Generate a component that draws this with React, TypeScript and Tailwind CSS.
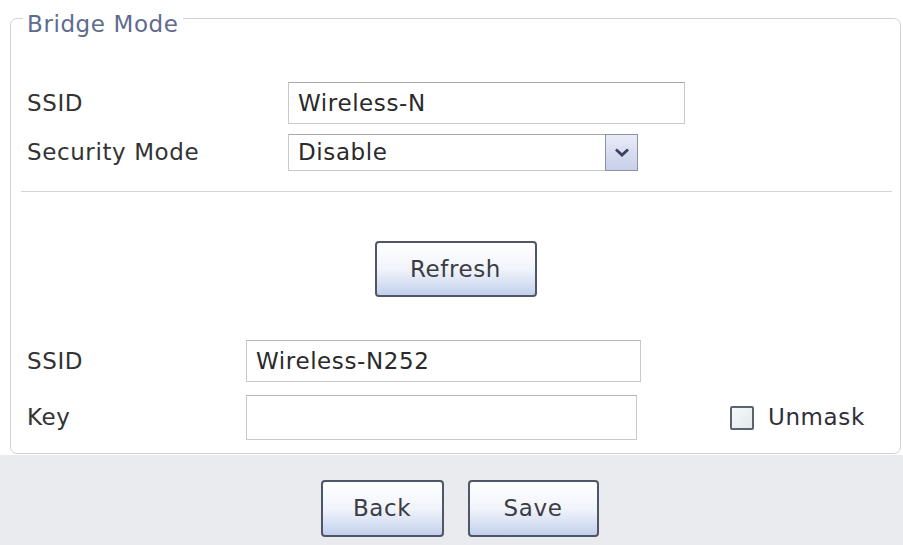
import React from "react";

function Btn({ label, w }: { label: string; w: string }) {
  return (
    <button
      type="button"
      className={`${w} h-[57px] rounded-[4px] border-2 border-[#4f5667] bg-gradient-to-b from-[#ffffff] via-[#f1f4fb] to-[#c3d0ec] text-[#3c3c44] text-[23px] tracking-[0.6px] flex items-center justify-center`}
    >
      {label}
    </button>
  );
}

export default function App() {
  return (
    <div className="w-[903px] h-[545px] flex flex-col bg-[#e9ebee] font-['DejaVu_Sans',sans-serif] text-[#333] text-[23px] tracking-[0.6px] overflow-hidden">
      <div className="bg-white pl-[10px] pr-[2px] pb-[1px]">
        <fieldset className="-mt-[2px] border border-[#cfd2d6] rounded-[7px] pl-[16px] pb-[13px]">
          <legend className="-ml-[4px] px-[4px] pt-[12px] leading-[28px] text-[#5e6b8e]">Bridge Mode</legend>

          <div className="mt-[44px] flex items-center h-[42px]">
            <div className="w-[261px]">SSID</div>
            <div className="w-[397px] h-[42px] border border-[#c9c9c9] border-t-[#a9a9a9] flex items-center pl-[9px] text-[#2a2a2a]">
              Wireless-N
            </div>
          </div>

          <div className="mt-[10px] flex items-center h-[37px]">
            <div className="w-[261px]">Security Mode</div>
            <div className="w-[350px] h-[37px] border border-[#c9c9c9] border-t-[#a9a9a9] flex items-center">
              <div className="flex-1 pl-[9px] text-[#2a2a2a]">Disable</div>
              <div className="w-[33px] h-[37px] -mr-px -my-px border border-[#8d92a3] bg-gradient-to-b from-[#e9ebf7] to-[#c9cfe9] flex items-center justify-center">
                <svg width="16" height="11" viewBox="0 0 16 11">
                  <path d="M2 2.5 L8 8 L14 2.5" fill="none" stroke="#3a4263" strokeWidth="2.8" />
                </svg>
              </div>
            </div>
          </div>

          <div className="mt-[20px] -ml-[6px] mr-[8px] h-px bg-[#d2d5d9]" />

          <div className="mt-[49px] flex justify-center pr-[16px]">
            <Btn label="Refresh" w="w-[162px] !h-[56px]" />
          </div>

          <div className="mt-[43px] flex items-center h-[42px]">
            <div className="w-[219px]">SSID</div>
            <div className="w-[395px] h-[42px] border border-[#c9c9c9] border-t-[#b3b3b3] flex items-center pl-[9px] text-[#2a2a2a]">
              Wireless-N252
            </div>
          </div>

          <div className="mt-[13px] flex items-center h-[45px]">
            <div className="w-[219px]">Key</div>
            <div className="w-[391px] h-[45px] border border-[#c9c9c9] border-t-[#b3b3b3]" />
            <div className="ml-[93px] w-[24px] h-[24px] border-2 border-[#5c6272] rounded-[2px] bg-gradient-to-br from-[#f6f9fa] to-[#e2e9ec]" />
            <div className="ml-[14px] text-[#2f2f3a]">Unmask</div>
          </div>
        </fieldset>
      </div>

      <div className="flex-1 flex justify-center gap-[24px] pt-[25px] pl-[16px]">
        <Btn label="Back" w="w-[123px]" />
        <Btn label="Save" w="w-[131px]" />
      </div>
    </div>
  );
}
